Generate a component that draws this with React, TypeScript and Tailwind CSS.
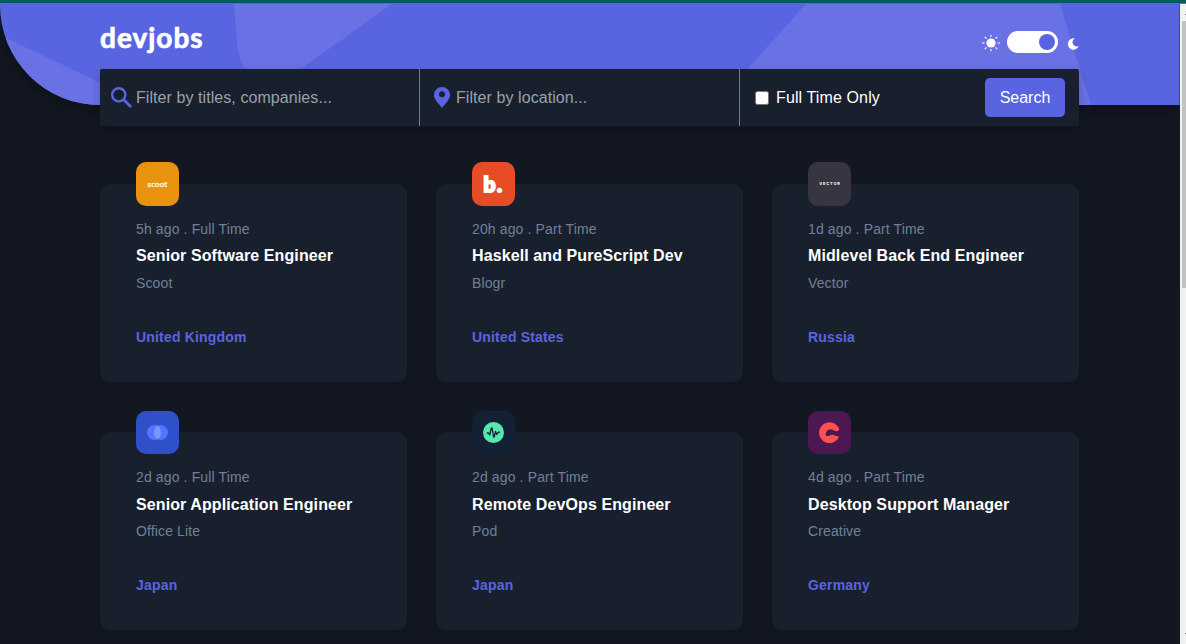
import type { ReactNode } from "react";

type Job = {
  age: string;
  title: string;
  company: string;
  place: string;
  tile: string;
  logo: ReactNode;
};

const jobs: Job[] = [
  {
    age: "5h ago . Full Time",
    title: "Senior Software Engineer",
    company: "Scoot",
    place: "United Kingdom",
    tile: "bg-[#e99210]",
    logo: (
      <span className="mt-px font-['Lato',sans-serif] text-[8px] leading-none font-bold tracking-[0.1px] text-[#fdf0d8] [-webkit-text-stroke:0.3px_#fdf0d8]">
        scoot
      </span>
    ),
  },
  {
    age: "20h ago . Part Time",
    title: "Haskell and PureScript Dev",
    company: "Blogr",
    place: "United States",
    tile: "bg-[#e64d26]",
    logo: (
      <span className="font-['Lato',sans-serif] text-[21px] leading-none font-bold tracking-[1.5px] text-white [-webkit-text-stroke:2.2px_white]">
        b.
      </span>
    ),
  },
  {
    age: "1d ago . Part Time",
    title: "Midlevel Back End Engineer",
    company: "Vector",
    place: "Russia",
    tile: "bg-[#363541]",
    logo: (
      <span className="ml-px font-['Inter',sans-serif] text-[4px] leading-none font-bold tracking-[0.8px] text-white">
        VECTOR
      </span>
    ),
  },
  {
    age: "2d ago . Full Time",
    title: "Senior Application Engineer",
    company: "Office Lite",
    place: "Japan",
    tile: "bg-[#2f50c8]",
    logo: (
      <svg width="21" height="15" viewBox="0 0 21 15">
        <circle cx="7.5" cy="7.5" r="7.5" fill="#5076ff" />
        <circle cx="13.5" cy="7.5" r="7.5" fill="#5076ff" />
        <ellipse cx="10.5" cy="7.5" rx="3.5" ry="6.5" fill="#7d94ff" />
      </svg>
    ),
  },
  {
    age: "2d ago . Part Time",
    title: "Remote DevOps Engineer",
    company: "Pod",
    place: "Japan",
    tile: "bg-[#142033]",
    logo: (
      <svg width="21" height="21" viewBox="0 0 21 21">
        <circle cx="10.5" cy="10.5" r="10.5" fill="#54e8ae" />
        <path
          d="M4.3 11h1.2l1.2 2 1.5-6.500q.6-1.400 1 0l1.3 8q.4 1.200.9 0l1.100-5 1.300 3 1.600-2.400h1.200"
          fill="none"
          stroke="#142033"
          strokeWidth="1.300"
          strokeLinecap="round"
          strokeLinejoin="round"
        />
      </svg>
    ),
  },
  {
    age: "4d ago . Part Time",
    title: "Desktop Support Manager",
    company: "Creative",
    place: "Germany",
    tile: "bg-[#4d1851]",
    logo: (
      <svg width="21" height="21" viewBox="0 0 21 21">
        <path
          d="M20.3 7.2A10.4 10.4 0 1 0 20.2 14.4C17.8 14.8 15.8 13.2 13.8 12.7C12 12.3 9.7 14.3 7 14C6 10.5 8.3 7.4 11.2 7.3C14 7.2 16 9.6 18.3 9.3Q20 8.9 20.3 7.2z"
          fill="#ff5151"
        />
      </svg>
    ),
  },
];

function JobCard({ job }: { job: Job }) {
  return (
    <article className="flex h-[198px] flex-col items-start rounded-[10px] bg-[#19202d] px-9 shadow-[0_4px_12px_rgba(0,0,0,0.15)]">
      <div
        className={`-mt-[21.6px] flex h-[43.3px] w-[43px] shrink-0 items-center justify-center overflow-hidden rounded-[10px] ${job.tile}`}
      >
        {job.logo}
      </div>
      <p className="mt-[13.4px] text-[14px] leading-5 tracking-[0.13px] text-[#6e8098]">{job.age}</p>
      <h2 className="mt-[5.3px] text-[16px] leading-6 font-bold tracking-[0.1px] text-white">{job.title}</h2>
      <p className="mt-[4.7px] text-[14px] leading-5 tracking-[0.13px] text-[#6e8098]">{job.company}</p>
      <p className="mt-[34px] text-[14px] leading-5 font-bold tracking-[0.18px] text-[#5964e0]">{job.place}</p>
    </article>
  );
}

function Sun() {
  return (
    <svg width="18" height="18" viewBox="0 0 18 18" stroke="#fff" strokeWidth="1.1">
      <circle cx="9" cy="9" r="4.6" fill="#fff" stroke="none" />
      <path d="M9 .8v2.2M9 15v2.2M0 9h2.6M15.4 9H18M2.8 3l1.7 1.7M13.5 13.4l1.7 1.7M2.8 15l1.7-1.7M13.5 4.6l1.7-1.7" />
    </svg>
  );
}

function Moon() {
  return (
    <svg width="12" height="12" viewBox="0 0 12 12">
      <path d="M7.800 .4A5.700 5.700 0 1 0 11.900 8A3.900 3.900 0 1 1 7.800 .4z" fill="#fff" />
    </svg>
  );
}

function Header() {
  return (
    <header className="relative h-[101px] w-[1180px] shrink-0 rounded-bl-[100px] bg-[#5964e0] shadow-[0_6px_14px_rgba(0,0,0,0.25)]">
      <svg
        className="absolute inset-0 overflow-hidden rounded-bl-[100px]"
        width="1180"
        height="101"
        viewBox="0 0 1180 101"
        fill="#6971e4"
      >
        <path d="M0 31L101 79V101H0z" />
        <path d="M234 0H392L288 74L250 71Q238 59 237 38z" />
        <path d="M806 0H1060L1091 101H715z" />
        <path d="M1179 0h1v101h-1z" fill="#3f489f" />
      </svg>
      <div className="relative mx-[100px] flex w-[979px] items-start justify-between">
        <h1 className="mt-[16px] font-['Lato',sans-serif] text-[28px] leading-[34px] font-bold tracking-[1px] text-white [-webkit-text-stroke:0.7px_white]">
          devjobs
        </h1>
        <div className="mt-[27px] flex items-center">
          <span className="mt-[2px]">
            <Sun />
          </span>
          <span className="ml-[7px] flex h-[22px] w-[51px] items-center justify-end rounded-full bg-white pr-[3px]">
            <span className="size-4 rounded-full bg-[#5964e0]" />
          </span>
          <span className="mt-[3px] ml-[9px]">
            <Moon />
          </span>
        </div>
      </div>
    </header>
  );
}

function SearchBar() {
  return (
    <form className="relative -mt-9 ml-[100px] flex h-[57px] w-[979px] shrink-0 rounded-[2px] bg-[#19202d] shadow-[0_4px_10px_rgba(0,0,0,0.2)]">
      <label className="flex w-[320px] items-center border-r border-[#6e8098] pl-[11px]">
        <svg width="21" height="21" viewBox="0 0 21 21" fill="none" stroke="#5964e0">
          <circle cx="7.800" cy="7.800" r="6.600" strokeWidth="2.400" />
          <path d="M13 13l7 7" strokeWidth="2.800" />
        </svg>
        <input
          className="ml-1 w-60 bg-transparent text-[16px] leading-6 tracking-[0.07px] text-white outline-none placeholder:text-[#98a0a8]"
          placeholder="Filter by titles, companies..."
        />
      </label>
      <label className="flex w-[320px] items-center border-r border-[#6e8098] pl-[14px]">
        <svg width="16" height="21" viewBox="0 0 16 21">
          <path
            d="M8 0a8 8 0 0 0-8 8c0 4.500 4.500 8.300 8 13c3.500-4.700 8-8.500 8-13a8 8 0 0 0-8-8zm0 4.300a3 3 0 1 1 0 6a3 3 0 0 1 0-6z"
            fill="#5964e0"
          />
        </svg>
        <input
          className="ml-[6px] w-60 bg-transparent text-[16px] leading-6 tracking-[0.07px] text-white outline-none placeholder:text-[#98a0a8]"
          placeholder="Filter by location..."
        />
      </label>
      <div className="flex flex-1 items-center justify-between pr-[14px] pl-[15px]">
        <label className="flex items-center text-[16px] leading-6 tracking-[0.12px] text-white">
          <input
            type="checkbox"
            className="mt-px mr-[7px] size-[14px] appearance-none rounded-[2.5px] border border-[#767676] bg-white"
          />
          Full Time Only
        </label>
        <button type="button" className="h-[39px] w-20 rounded-[5px] bg-[#5964e0] text-[16px] text-white">
          Search
        </button>
      </div>
    </form>
  );
}

export default function App() {
  return (
    <div className="flex h-[644px] w-[1186px] flex-col overflow-hidden bg-[#121721] font-['Liberation_Sans',sans-serif]">
      <div className="h-1 shrink-0 border-b border-[#3c8580] bg-[#045c60]" />
      <div className="flex min-h-0 flex-1">
        <main className="flex w-[1180px] flex-col overflow-hidden">
          <Header />
          <SearchBar />
          <section className="mt-[57.9px] ml-[100px] grid w-[979px] grid-cols-3 gap-x-[29px] gap-y-[50.4px]">
            {jobs.map((job) => (
              <JobCard key={job.title} job={job} />
            ))}
          </section>
        </main>
        <aside className="flex w-[6px] flex-col bg-[#f1f1f1] pl-[2px]">
          <span className="mt-[10px] ml-[3px] h-px w-px bg-[#777777]" />
          <span className="mt-[6px] h-[267px] bg-[#c1c1c1]" />
          <span className="mt-auto mb-[10px] ml-[3px] h-px w-px bg-[#555555]" />
        </aside>
      </div>
    </div>
  );
}
